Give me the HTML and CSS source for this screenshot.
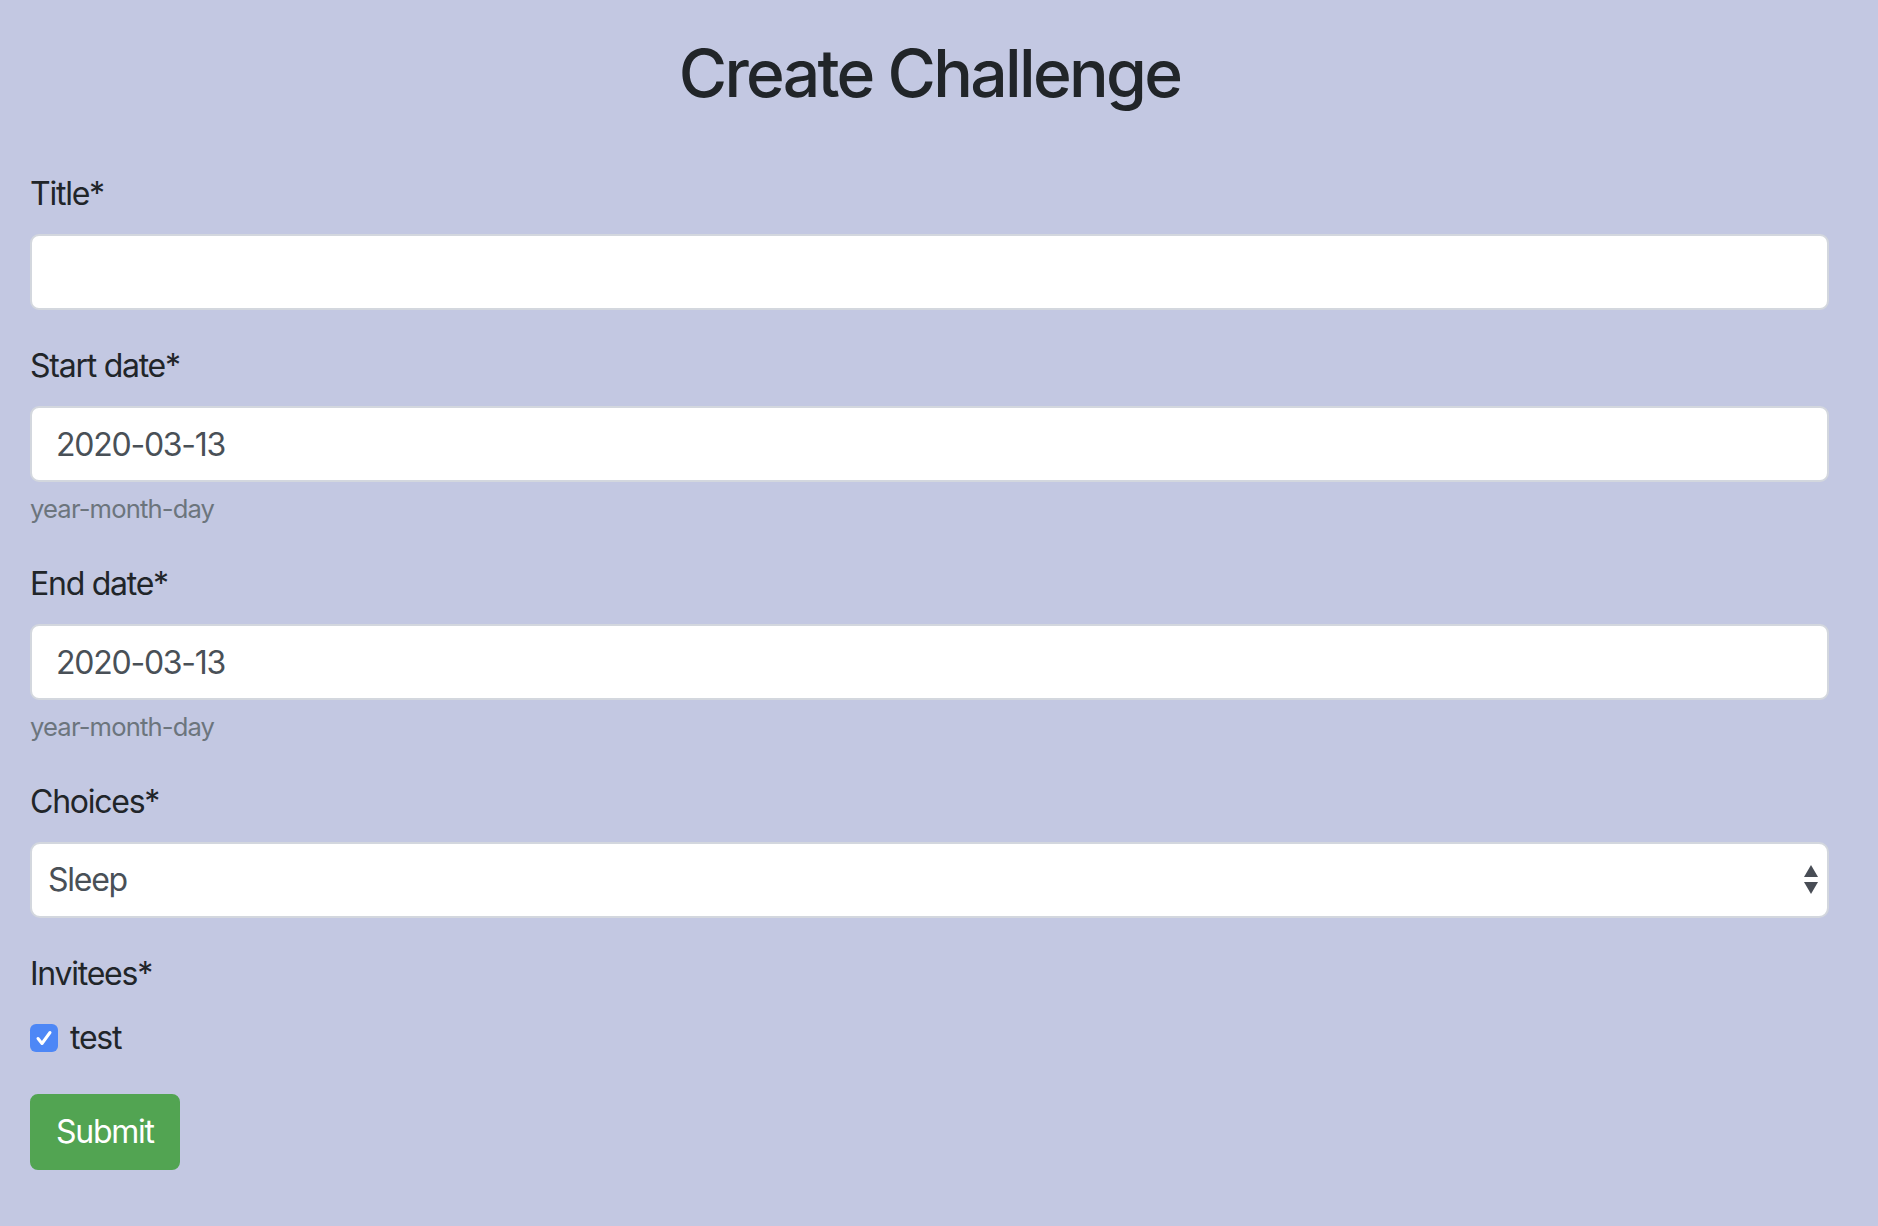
FILE: index.html
```html
<!DOCTYPE html>
<html lang="en">
<head>
<meta charset="utf-8">
<title>Create Challenge</title>
<link rel="stylesheet" href="styles.css">
</head>
<body>
<div class="container">
  <h1 class="page-title">Create Challenge</h1>
  <form class="form">
    <div class="form-group">
      <label class="label" for="title">Title*</label>
      <input class="control" id="title" type="text">
    </div>
    <div class="form-group">
      <label class="label" for="start">Start date*</label>
      <input class="control" id="start" type="text" value="2020-03-13">
      <small class="help">year-month-day</small>
    </div>
    <div class="form-group">
      <label class="label" for="end">End date*</label>
      <input class="control" id="end" type="text" value="2020-03-13">
      <small class="help">year-month-day</small>
    </div>
    <div class="form-group">
      <label class="label" for="choices">Choices*</label>
      <div class="select">
        <span class="select-value">Sleep</span>
        <svg class="select-arrows" width="16" height="30" viewBox="0 0 16 30">
          <path d="M8 0 L15 12 L1 12 Z" fill="#484d55"/>
          <path d="M1 17 L15 17 L8 29 Z" fill="#484d55"/>
        </svg>
      </div>
    </div>
    <div class="form-group">
      <div class="label">Invitees*</div>
      <div class="check-row">
        <span class="checkbox">
          <svg width="28" height="28" viewBox="0 0 28 28">
            <path d="M8 14.5 L12 19.5 L20 8.5" fill="none" stroke="#fff" stroke-width="3" stroke-linecap="round" stroke-linejoin="round"/>
          </svg>
        </span>
        <span class="check-label">test</span>
      </div>
    </div>
    <button class="btn-submit" type="button">Submit</button>
  </form>
</div>
</body>
</html>
```
FILE: styles.css
```css
html, body {
  margin: 0;
  padding: 0;
}
body {
  background: #c3c8e2;
  font-family: Inter, "Noto Sans", "Liberation Sans", sans-serif;
  font-size: 32px;
  line-height: 1.5;
  letter-spacing: -1.25px;
  color: #212529;
}
.container {
  padding: 34px 49px 40px 30px;
}
.page-title {
  margin: 0 0 57px 0;
  text-align: center;
  font-size: 66px;
  font-weight: 500;
  line-height: 1.2;
  letter-spacing: -2.7px;
  color: #212529;
}
.form {
  display: flex;
  flex-direction: column;
}
.form-group {
  display: flex;
  flex-direction: column;
  margin-bottom: 32px;
}
.label {
  display: block;
  margin-bottom: 16px;
  line-height: 48px;
}
.control {
  box-sizing: border-box;
  height: 76px;
  width: 100%;
  margin: 0;
  padding: 12px 24px;
  border: 2px solid #d3d7de;
  border-radius: 9px;
  background: #fff;
  font-family: inherit;
  font-size: 32px;
  letter-spacing: -1.25px;
  line-height: 48px;
  color: #495057;
  outline: none;
}
.help {
  display: block;
  margin-top: 8px;
  font-size: 25.6px;
  letter-spacing: -0.85px;
  line-height: 38px;
  color: #6c757d;
}
.select {
  box-sizing: border-box;
  height: 76px;
  display: flex;
  align-items: center;
  justify-content: space-between;
  padding: 0 8px 0 16px;
  border: 2px solid #d3d7de;
  border-radius: 10px;
  background: #fff;
  color: #495057;
}
.select-value {
  font-size: 32px;
  line-height: 48px;
}
.select-arrows {
  display: block;
}
.check-row {
  display: flex;
  align-items: center;
  height: 48px;
  gap: 12px;
}
.checkbox {
  display: flex;
  width: 28px;
  height: 28px;
  border-radius: 6px;
  background: #4d87f6;
}
.check-label {
  line-height: 48px;
}
.btn-submit {
  align-self: flex-start;
  box-sizing: border-box;
  height: 76px;
  margin: 0;
  padding: 12px 24px;
  border: 2px solid #52a452;
  border-radius: 8px;
  background: #52a452;
  color: #fff;
  font-family: inherit;
  font-size: 32px;
  letter-spacing: -1.25px;
  line-height: 48px;
}
```
